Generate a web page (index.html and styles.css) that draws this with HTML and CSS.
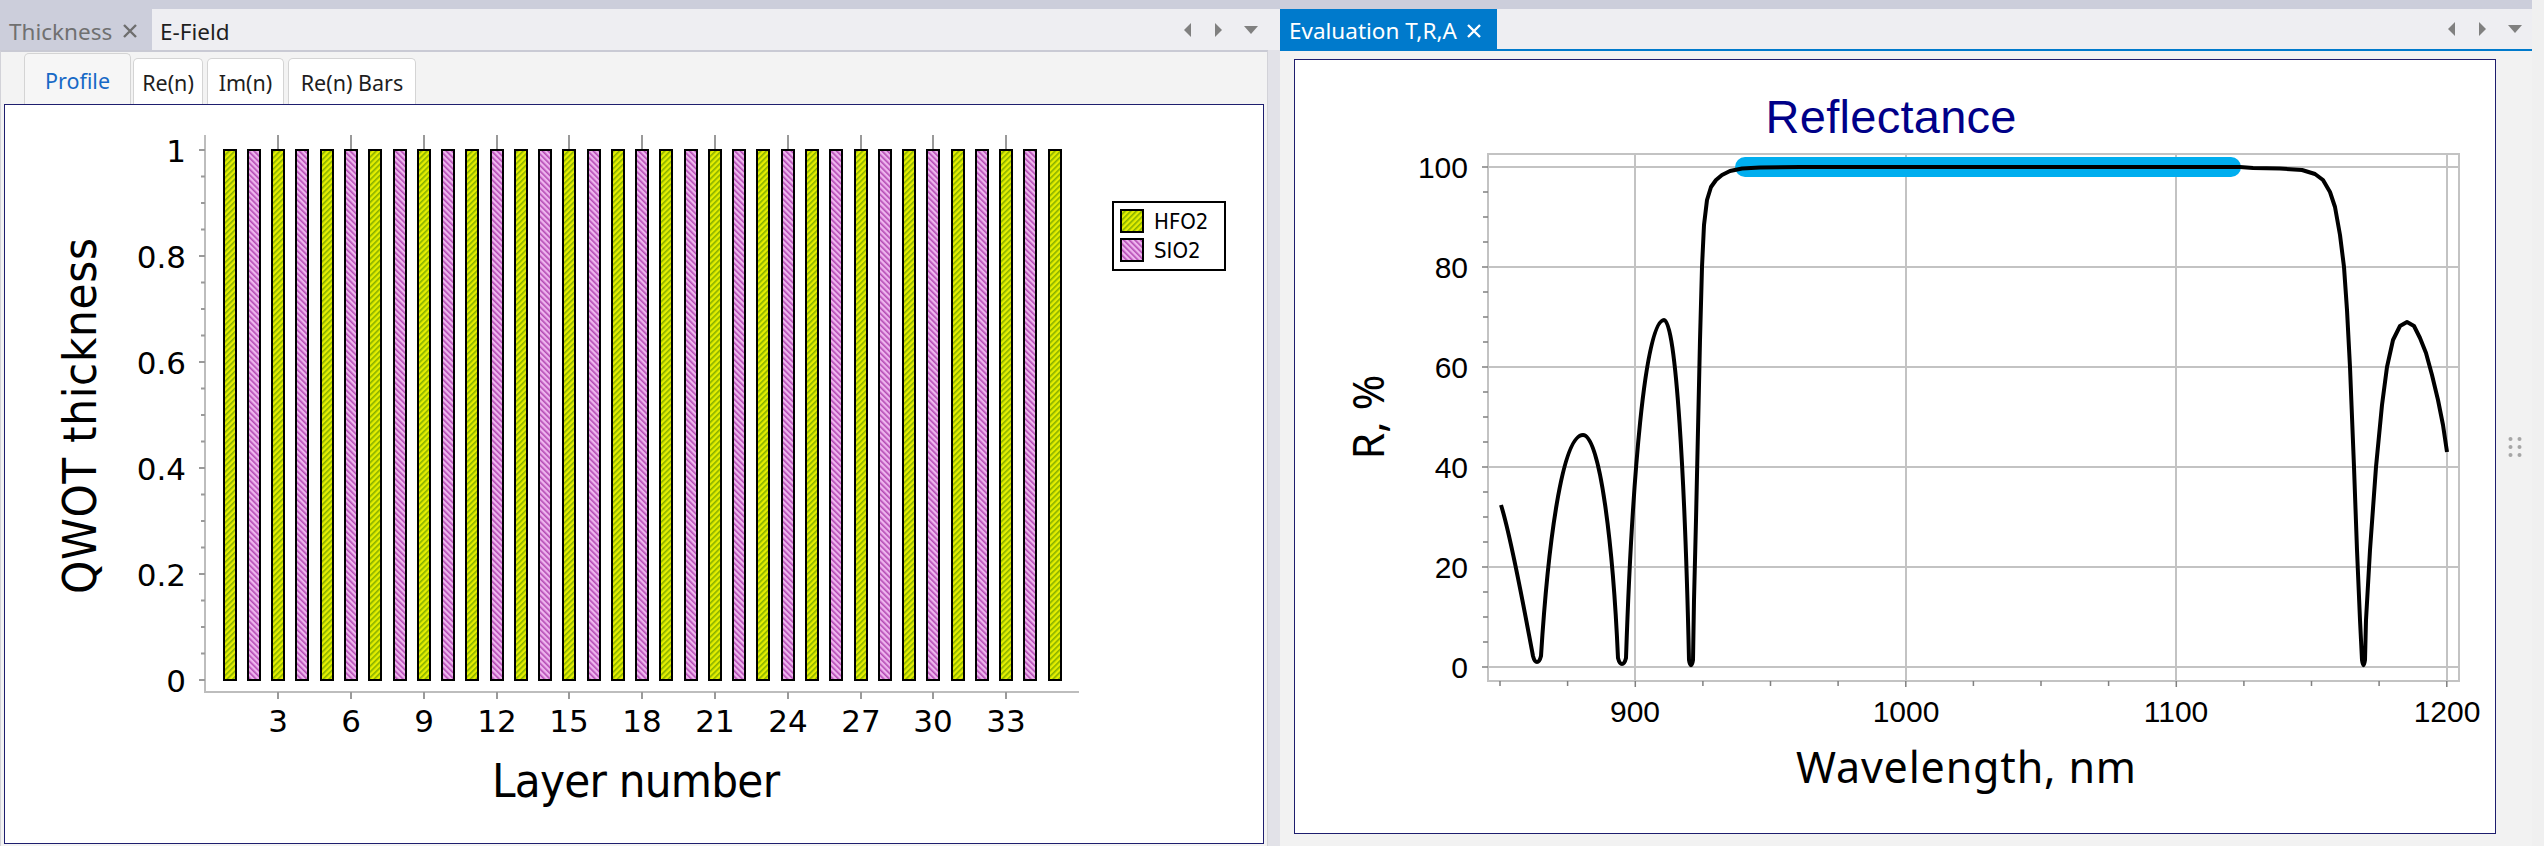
FILE: index.html
```html
<!DOCTYPE html>
<html>
<head>
<meta charset="utf-8">
<title>Thickness / Evaluation</title>
<link rel="stylesheet" href="styles.css">
</head>
<body>
<div class="app">
  <section class="pane pane-left">
    <div class="doc-tabs">
      <div class="doc-tab doc-tab-inactive">Thickness
        <svg class="close" width="14" height="14" viewBox="0 0 14 14"><path d="M1 1L13 13M13 1L1 13"/></svg>
      </div>
      <div class="doc-tab doc-tab-plain">E-Field</div>
      <div class="tab-arrows">
        <svg width="8" height="14" viewBox="0 0 8 14"><path d="M7 0V14L0 7Z"/></svg>
        <svg width="8" height="14" viewBox="0 0 8 14"><path d="M1 0V14L8 7Z"/></svg>
        <svg width="14" height="8" viewBox="0 0 14 8"><path d="M0 0H14L7 8Z"/></svg>
      </div>
    </div>
    <div class="doc-body doc-body-left">
      <div class="subtabs">
        <div class="subtab subtab-active subtab-profile">Profile</div>
        <div class="subtab subtab-re">Re(n)</div>
        <div class="subtab subtab-im">Im(n)</div>
        <div class="subtab subtab-bars">Re(n) Bars</div>
      </div>
      <div class="chart-box chart-left">
        <svg class="plot" width="1258" height="738" viewBox="5 105 1258 738">
          <defs>
            <pattern id="hatch-h" width="4" height="4" patternUnits="userSpaceOnUse" patternTransform="rotate(45)">
              <rect width="4" height="4" fill="#E4EE00"/>
              <rect width="1.6" height="4" fill="#86B000"/>
            </pattern>
            <pattern id="hatch-s" width="4" height="4" patternUnits="userSpaceOnUse" patternTransform="rotate(-45)">
              <rect width="4" height="4" fill="#EEB4EE"/>
              <rect width="1.6" height="4" fill="#B44AB4"/>
            </pattern>
          </defs>
          <g class="axis-lines">
            <path d="M205 135V692H1079"/>
          </g>
          <g class="tick-lines">
            <path d="M199 680H205M201 653.5H205M201 627H205M201 600.5H205M199 574H205M201 547.5H205M201 521H205M201 494.5H205M199 468H205M201 441.5H205M201 415H205M201 388.5H205M199 362H205M201 335.5H205M201 309H205M201 282.5H205M199 256H205M201 229.5H205M201 203H205M201 176.5H205M199 150H205"/>
            <path d="M278 692V699M351 692V699M424 692V699M497 692V699M569 692V699M642 692V699M715 692V699M788 692V699M861 692V699M933 692V699M1006 692V699"/>
            <path d="M278 135V149M351 135V149M424 135V149M497 135V149M569 135V149M642 135V149M715 135V149M788 135V149M861 135V149M933 135V149M1006 135V149"/>
          </g>
          <g class="bars">
            <rect class="bar-h" x="224" y="150" width="12" height="530"/>
            <rect class="bar-s" x="248" y="150" width="12" height="530"/>
            <rect class="bar-h" x="272" y="150" width="12" height="530"/>
            <rect class="bar-s" x="296" y="150" width="12" height="530"/>
            <rect class="bar-h" x="321" y="150" width="12" height="530"/>
            <rect class="bar-s" x="345" y="150" width="12" height="530"/>
            <rect class="bar-h" x="369" y="150" width="12" height="530"/>
            <rect class="bar-s" x="394" y="150" width="12" height="530"/>
            <rect class="bar-h" x="418" y="150" width="12" height="530"/>
            <rect class="bar-s" x="442" y="150" width="12" height="530"/>
            <rect class="bar-h" x="466" y="150" width="12" height="530"/>
            <rect class="bar-s" x="491" y="150" width="12" height="530"/>
            <rect class="bar-h" x="515" y="150" width="12" height="530"/>
            <rect class="bar-s" x="539" y="150" width="12" height="530"/>
            <rect class="bar-h" x="563" y="150" width="12" height="530"/>
            <rect class="bar-s" x="588" y="150" width="12" height="530"/>
            <rect class="bar-h" x="612" y="150" width="12" height="530"/>
            <rect class="bar-s" x="636" y="150" width="12" height="530"/>
            <rect class="bar-h" x="660" y="150" width="12" height="530"/>
            <rect class="bar-s" x="685" y="150" width="12" height="530"/>
            <rect class="bar-h" x="709" y="150" width="12" height="530"/>
            <rect class="bar-s" x="733" y="150" width="12" height="530"/>
            <rect class="bar-h" x="757" y="150" width="12" height="530"/>
            <rect class="bar-s" x="782" y="150" width="12" height="530"/>
            <rect class="bar-h" x="806" y="150" width="12" height="530"/>
            <rect class="bar-s" x="830" y="150" width="12" height="530"/>
            <rect class="bar-h" x="855" y="150" width="12" height="530"/>
            <rect class="bar-s" x="879" y="150" width="12" height="530"/>
            <rect class="bar-h" x="903" y="150" width="12" height="530"/>
            <rect class="bar-s" x="927" y="150" width="12" height="530"/>
            <rect class="bar-h" x="952" y="150" width="12" height="530"/>
            <rect class="bar-s" x="976" y="150" width="12" height="530"/>
            <rect class="bar-h" x="1000" y="150" width="12" height="530"/>
            <rect class="bar-s" x="1024" y="150" width="12" height="530"/>
            <rect class="bar-h" x="1049" y="150" width="12" height="530"/>
          </g>
          <g class="num-left">
            <text x="186" y="162" text-anchor="end">1</text>
            <text x="186" y="268" text-anchor="end">0.8</text>
            <text x="186" y="374" text-anchor="end">0.6</text>
            <text x="186" y="480" text-anchor="end">0.4</text>
            <text x="186" y="586" text-anchor="end">0.2</text>
            <text x="186" y="692" text-anchor="end">0</text>
          </g>
          <g class="num-left" text-anchor="middle">
            <text x="278" y="732">3</text>
            <text x="351" y="732">6</text>
            <text x="424" y="732">9</text>
            <text x="497" y="732">12</text>
            <text x="569" y="732">15</text>
            <text x="642" y="732">18</text>
            <text x="715" y="732">21</text>
            <text x="788" y="732">24</text>
            <text x="861" y="732">27</text>
            <text x="933" y="732">30</text>
            <text x="1006" y="732">33</text>
          </g>
          <text class="title-left" x="636" y="797" text-anchor="middle" textLength="288">Layer number</text>
          <text class="title-left" x="96" y="416" text-anchor="middle" textLength="356" transform="rotate(-90 96 416)">QWOT thickness</text>
          <g class="legend">
            <rect class="legend-box" x="1113" y="202" width="112" height="68"/>
            <rect class="bar-h" x="1121" y="210" width="22" height="22"/>
            <rect class="bar-s" x="1121" y="239" width="22" height="22"/>
            <text class="legend-text" x="1154" y="229">HFO2</text>
            <text class="legend-text" x="1154" y="258">SIO2</text>
          </g>
        </svg>
      </div>
    </div>
  </section>

  <div class="splitter">
    <div class="splitter-top"></div>
    <div class="splitter-head"></div>
    <div class="splitter-body"></div>
  </div>

  <section class="pane pane-right">
    <div class="doc-tabs doc-tabs-right">
      <div class="doc-tab doc-tab-blue">Evaluation T,R,A
        <svg class="close close-white" width="14" height="14" viewBox="0 0 14 14"><path d="M1 1L13 13M13 1L1 13"/></svg>
      </div>
      <div class="tab-arrows">
        <svg width="8" height="14" viewBox="0 0 8 14"><path d="M7 0V14L0 7Z"/></svg>
        <svg width="8" height="14" viewBox="0 0 8 14"><path d="M1 0V14L8 7Z"/></svg>
        <svg width="14" height="8" viewBox="0 0 14 8"><path d="M0 0H14L7 8Z"/></svg>
      </div>
    </div>
    <div class="doc-body doc-body-right">
      <div class="chart-box chart-right">
        <svg class="plot" width="1200" height="773" viewBox="1295 60 1200 773">
          <g class="grid">
            <path d="M1488 167H2459M1488 267H2459M1488 367H2459M1488 467H2459M1488 567H2459M1488 667H2459"/>
            <path d="M1635 154V681M1906 154V681M2176 154V681M2447 154V681"/>
            <rect x="1488" y="154" width="971" height="527"/>
          </g>
          <g class="tick-lines-r">
            <path d="M1482 667H1488M1483 642H1488M1483 617H1488M1483 592H1488M1482 567H1488M1483 542H1488M1483 517H1488M1483 492H1488M1482 467H1488M1483 442H1488M1483 417H1488M1483 392H1488M1482 367H1488M1483 342H1488M1483 317H1488M1483 292H1488M1482 267H1488M1483 242H1488M1483 217H1488M1483 192H1488M1482 167H1488"/>
            <path d="M1500 681V686M1567.6 681V686M1635.3 681V687M1702.9 681V686M1770.5 681V686M1838.1 681V686M1905.8 681V687M1973.4 681V686M2041 681V686M2108.6 681V686M2176.3 681V687M2243.9 681V686M2311.5 681V686M2379.1 681V686M2446.8 681V687"/>
          </g>
          <g class="num-right">
            <text x="1468" y="178" text-anchor="end">100</text>
            <text x="1468" y="278" text-anchor="end">80</text>
            <text x="1468" y="378" text-anchor="end">60</text>
            <text x="1468" y="478" text-anchor="end">40</text>
            <text x="1468" y="578" text-anchor="end">20</text>
            <text x="1468" y="678" text-anchor="end">0</text>
          </g>
          <g class="num-right" text-anchor="middle">
            <text x="1635" y="722">900</text>
            <text x="1906" y="722">1000</text>
            <text x="2176" y="722">1100</text>
            <text x="2447" y="722">1200</text>
          </g>
          <text class="chart-title" x="1891" y="133" text-anchor="middle" textLength="251">Reflectance</text>
          <text class="title-right" x="1966" y="783" text-anchor="middle" textLength="340">Wavelength, nm</text>
          <text class="title-right" x="1384" y="417" text-anchor="middle" transform="rotate(-90 1384 417)">R, %</text>
          <path class="target" d="M1745 167H2231"/>
          <path class="curve" d="M1501 505C1512 540 1527 625 1533 656C1535 664 1539 664 1541 656C1548 545 1562 435 1583 435C1600 435 1613 545 1618 658C1620 666 1624 666 1626 658C1632 480 1645 320 1664 320C1676 320 1685 480 1689 660C1690 667 1692 667 1693 660L1694 600L1696 520L1698 430L1700 340L1702 267L1704 225L1707 200L1711 187L1716 180L1722 175L1730 171L1742 168.5L1760 167.5L1800 167L2240 167L2253 168L2280 168.5L2302 170L2315 174L2323 180L2330 192L2335 207L2340 235L2344 267L2347 310L2350 367L2354 467L2357 550L2360 620L2362 660C2363 667 2364 667 2365 660L2366 620L2370 550L2376 467L2382 405L2387 367L2393 340L2400 326L2407 322L2414 326L2420 338L2426 353L2432 375L2438 400L2443 425L2447 452"/>
        </svg>
      </div>
      <div class="gutter">
        <svg width="14" height="22" viewBox="0 0 14 22"><circle cx="2.5" cy="3" r="2"/><circle cx="11.5" cy="3" r="2"/><circle cx="2.5" cy="11" r="2"/><circle cx="11.5" cy="11" r="2"/><circle cx="2.5" cy="19" r="2"/><circle cx="11.5" cy="19" r="2"/></svg>
      </div>
    </div>
  </section>
  <div class="edge"></div>
</div>
</body>
</html>
```
FILE: styles.css
```css
* { box-sizing: border-box; }

html, body {
  margin: 0;
  padding: 0;
}

body {
  width: 2544px;
  height: 846px;
  overflow: hidden;
  background: #F0F0F2;
  font-family: "Noto Sans", "Open Sans", sans-serif;
  color: #1E1E1E;
}

.app {
  display: flex;
  height: 846px;
}

.pane {
  display: flex;
  flex-direction: column;
  padding-top: 9px;
  background: #CCCEDB;
}

.pane-left { width: 1268px; }
.pane-right { width: 1252px; }

.doc-tabs {
  display: flex;
  height: 41px;
  background: #EEEEF2;
}

.doc-tabs-right { height: 40px; }

.doc-tab {
  display: flex;
  align-items: center;
  padding-top: 3px;
  font-size: 22.5px;
  white-space: nowrap;
}

.doc-tab-inactive {
  width: 152px;
  padding-left: 9px;
  gap: 11px;
  background: #CCCEDB;
  color: #707070;
}

.doc-tab-plain {
  padding-left: 8px;
  color: #1E1E1E;
}

.doc-tab-blue {
  width: 217px;
  padding-left: 9px;
  gap: 10px;
  background: #007ACC;
  color: #FFFFFF;
}

.close path {
  stroke: #6E6E6E;
  stroke-width: 2.4;
  fill: none;
}

.close-white path { stroke: #FFFFFF; }

.tab-arrows {
  margin-left: auto;
  display: flex;
  align-items: center;
  gap: 22px;
  padding-right: 10px;
}

.tab-arrows path { fill: #808080; }

.doc-body {
  flex: 1;
  display: flex;
}

.doc-body-left {
  flex-direction: column;
  background: #F3F3F3;
  border-top: 2px solid #C9CAD4;
  border-left: 1px solid #D2D2D8;
  border-right: 1px solid #D2D2D8;
}

.doc-body-right {
  background: #F2F2F2;
  border-top: 2px solid #007ACC;
  padding: 8px 0 12px 14px;
}

.subtabs {
  display: flex;
  align-items: flex-end;
  height: 52px;
  padding-left: 23px;
}

.subtab {
  display: flex;
  align-items: center;
  justify-content: center;
  height: 46px;
  margin-left: 4px;
  padding-top: 2px;
  background: #FFFFFF;
  border: 1px solid #D4D4D4;
  border-bottom: none;
  border-radius: 5px 5px 0 0;
  font-size: 21.5px;
  color: #1E1E1E;
}

.subtab-active {
  height: 51px;
  margin-left: 0;
  padding-top: 3px;
  background: #F6F6F6;
  color: #1769C6;
}

.subtab-profile { width: 107px; }
.subtab-re { width: 70px; margin-left: 2px; }
.subtab-im { width: 77px; }
.subtab-bars { width: 128px; }

.chart-box {
  background: #FFFFFF;
  border: 1px solid #1E1E6E;
}

.chart-left {
  flex: 1;
  margin: 0 3px 2px 3px;
}

.chart-right {
  width: 1202px;
}

.plot { display: block; }

.axis-lines path {
  stroke: #BDBDBD;
  stroke-width: 2;
  fill: none;
}

.tick-lines path {
  stroke: #9A9A9A;
  stroke-width: 2;
  fill: none;
}

.bar-h, .bar-s {
  stroke: #000000;
  stroke-width: 2;
}

.bar-h { fill: url(#hatch-h); }
.bar-s { fill: url(#hatch-s); }

.num-left {
  font-family: "DejaVu Sans", Verdana, sans-serif;
  font-size: 31px;
  fill: #000000;
}

.title-left {
  font-family: "DejaVu Sans Condensed", "DejaVu Sans", sans-serif;
  font-size: 47px;
  fill: #000000;
}

.legend-box {
  fill: #FFFFFF;
  stroke: #000000;
  stroke-width: 2;
}

.legend-text {
  font-family: "DejaVu Sans Condensed", "DejaVu Sans", sans-serif;
  font-size: 22px;
  fill: #000000;
}

.grid path, .grid rect {
  stroke: #C3C3C3;
  stroke-width: 2;
  fill: none;
}

.tick-lines-r path {
  stroke: #808080;
  stroke-width: 1.5;
  fill: none;
}

.num-right {
  font-family: "Liberation Sans", Arial, sans-serif;
  font-size: 30px;
  fill: #000000;
}

.chart-title {
  font-family: "Liberation Sans", Arial, sans-serif;
  font-size: 47px;
  fill: #000088;
}

.title-right {
  font-family: "Noto Sans", "Open Sans", sans-serif;
  font-size: 43px;
  fill: #000000;
}

.target {
  stroke: #00AEEF;
  stroke-width: 20;
  stroke-linecap: round;
  fill: none;
}

.curve {
  stroke: #000000;
  stroke-width: 4;
  stroke-linejoin: round;
  fill: none;
}

.gutter {
  width: 36px;
  display: flex;
  align-items: center;
  justify-content: center;
  padding-left: 1px;
}

.gutter circle { fill: #A6A6A6; }

.splitter {
  width: 12px;
  display: flex;
  flex-direction: column;
}

.splitter-top { height: 9px; background: #CCCEDB; }
.splitter-head { height: 41px; background: #EEEEF2; }
.splitter-body { flex: 1; background: #E2E2E8; }

.edge {
  width: 12px;
  background: #F0F0F0;
}
```
